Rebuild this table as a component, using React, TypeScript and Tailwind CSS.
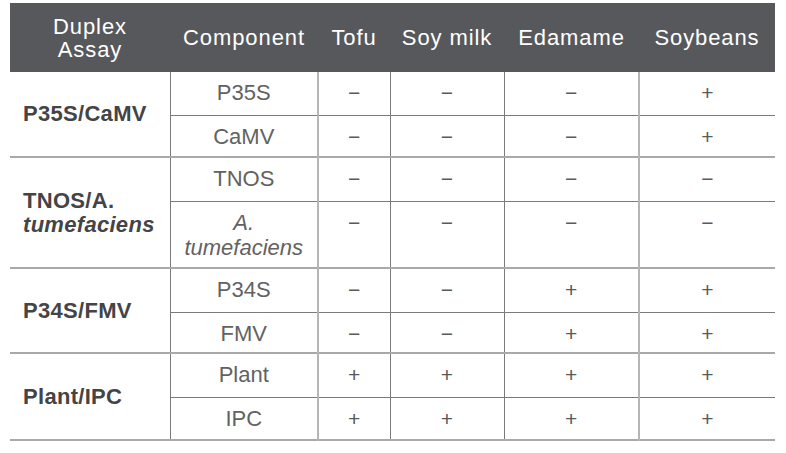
import React from 'react';

type Row = { comp: React.ReactNode; vals: string[]; h: string };
type Group = { label: React.ReactNode; rows: Row[] };

const M = '−';

const groups: Group[] = [
  {
    label: 'P35S/CaMV',
    rows: [
      { comp: 'P35S', vals: [M, M, M, '+'], h: 'h-[43px]' },
      { comp: 'CaMV', vals: [M, M, M, '+'], h: 'h-[42px]' },
    ],
  },
  {
    label: (
      <>
        TNOS/A.
        <br />
        <i>tumefaciens</i>
      </>
    ),
    rows: [
      { comp: 'TNOS', vals: [M, M, M, M], h: 'h-[44px]' },
      {
        comp: (
          <i>
            A.
            <br />
            tumefaciens
          </i>
        ),
        vals: [M, M, M, M],
        h: 'h-[67px]',
      },
    ],
  },
  {
    label: 'P34S/FMV',
    rows: [
      { comp: 'P34S', vals: [M, M, '+', '+'], h: 'h-[44px]' },
      { comp: 'FMV', vals: [M, M, '+', '+'], h: 'h-[41px]' },
    ],
  },
  {
    label: 'Plant/IPC',
    rows: [
      { comp: 'Plant', vals: ['+', '+', '+', '+'], h: 'h-[44px]' },
      { comp: 'IPC', vals: ['+', '+', '+', '+'], h: 'h-[43px]' },
    ],
  },
];

const headers = ['Component', 'Tofu', 'Soy milk', 'Edamame', 'Soybeans'];

export default function App() {
  return (
    <div className="bg-white w-[786px] h-[453px] pt-[3px] pl-[10px] font-['Liberation_Sans',Arial,sans-serif]">
      <table className="table-fixed border-collapse w-[765px]">
        <colgroup>
          <col className="w-[160px]" />
          <col className="w-[148px]" />
          <col className="w-[72px]" />
          <col className="w-[114px]" />
          <col className="w-[135px]" />
          <col className="w-[136px]" />
        </colgroup>
        <thead>
          <tr className="h-[69px] bg-[#57585b] text-white text-[22px] tracking-[0.9px]">
            <th className="font-normal leading-[23px] text-center">
              Duplex
              <br />
              Assay
            </th>
            {headers.map((h) => (
              <th key={h} className="font-normal text-center whitespace-nowrap">
                {h}
              </th>
            ))}
          </tr>
        </thead>
        <tbody>
          {groups.map((g, gi) =>
            g.rows.map((r, ri) => (
              <tr
                key={`${gi}-${ri}`}
                className={`${r.h} ${
                  ri === g.rows.length - 1
                    ? 'border-b-2 border-b-[#a9a9a9]'
                    : 'border-b border-b-[#7a7a7a]'
                }`}
              >
                {ri === 0 && (
                  <td
                    rowSpan={g.rows.length}
                    className="align-middle pl-[13px] text-[22px] leading-[24px] font-bold text-[#444446] tracking-[0.3px]"
                  >
                    {g.label}
                  </td>
                )}
                <td className="align-top text-center pt-[8px] text-[22px] leading-[25px] text-[#626262] border-l border-l-[#7a7a7a]">
                  {r.comp}
                </td>
                {r.vals.map((v, vi) => (
                  <td
                    key={vi}
                    className={`align-top text-center pt-[8px] text-[21px] leading-[25px] text-[#5a5a5a] ${
                      vi === 0 || vi === 3
                        ? 'border-l-2 border-l-[#b5b5b5]'
                        : 'border-l border-l-[#7a7a7a]'
                    }`}
                  >
                    {v}
                  </td>
                ))}
              </tr>
            ))
          )}
        </tbody>
      </table>
    </div>
  );
}
